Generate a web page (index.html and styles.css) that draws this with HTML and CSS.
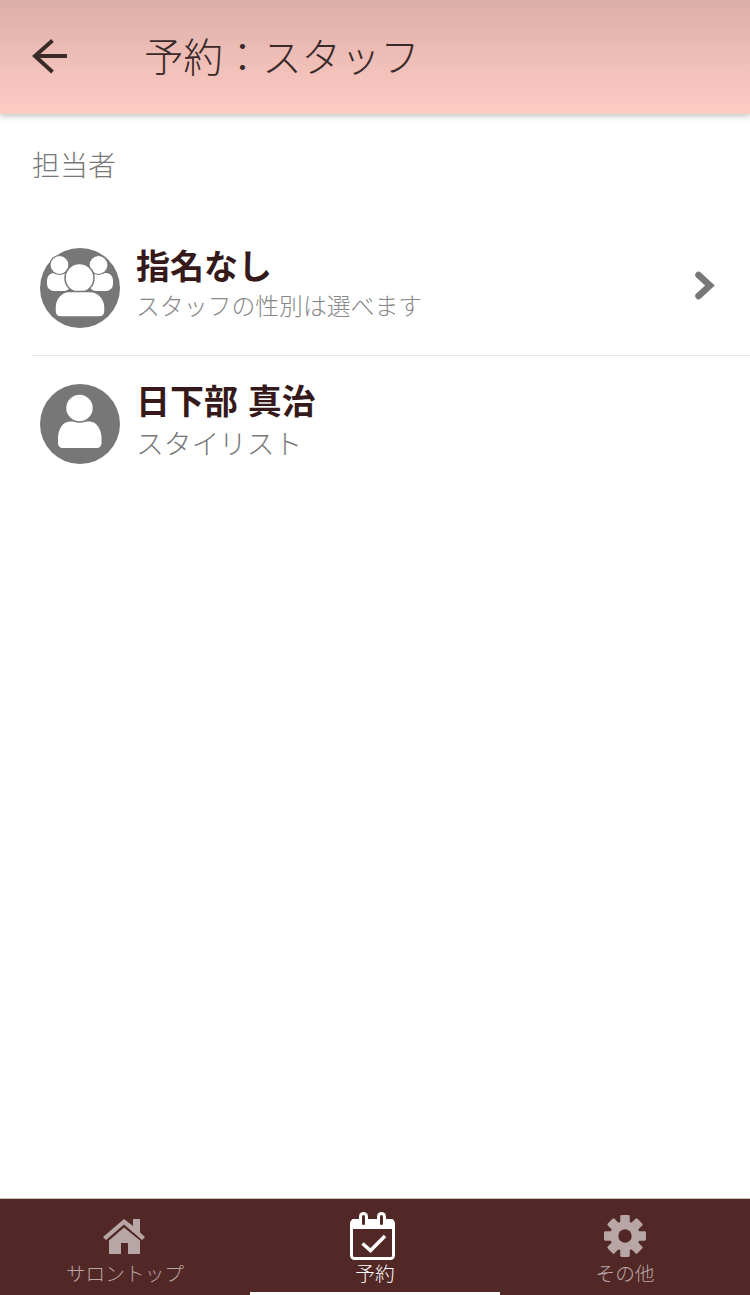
FILE: index.html
```html
<!DOCTYPE html>
<html lang="ja">
<head>
    <meta charset="UTF-8">
    <meta name="viewport" content="width=device-width, initial-scale=1.0">
    <title>予約&#xFF1A;スタッフ</title>
    <link rel="stylesheet" href="styles.css">
</head>
<body>
    <div class="page">
        <header class="app-header">
            <svg class="back-icon" viewBox="0 0 36 36" width="36" height="36">
                <path d="M36 17H4M21.500 1.500L4 17L21.500 33" fill="none" stroke="#3a2a2a" stroke-width="4"/>
            </svg>
            <h1>予約&#xFF1A;スタッフ</h1>
        </header>

        <main class="content">
            <h2 class="section-title">担当者</h2>

            <ul class="staff-list">
                <li class="staff-item">
                    <svg class="avatar" viewBox="0 0 80 80" width="80" height="80">
                        <circle cx="40" cy="40" r="40" fill="#777"/>
                        <rect x="7" y="25" width="24" height="18" rx="7" fill="#fff"/>
                        <rect x="49" y="25" width="24" height="18" rx="7" fill="#fff"/>
                        <circle cx="19.500" cy="17" r="9.500" fill="#fff" stroke="#777" stroke-width="1.200"/>
                        <circle cx="58.500" cy="17" r="9.500" fill="#fff" stroke="#777" stroke-width="1.200"/>
                        <circle cx="39.500" cy="30" r="14.500" fill="#fff" stroke="#777" stroke-width="1.500"/>
                        <path d="M29 43.500h21c9 0 15 8 15 16V63c0 3-2 6-6 6H21c-4 0-6-3-6-6v-3.500c0-8 5.500-16 14-16z" fill="#fff" stroke="#777" stroke-width="1.500"/>
                    </svg>
                    <div class="staff-text">
                        <div class="staff-name">指名なし</div>
                        <div class="staff-note">スタッフの性別は選べます</div>
                    </div>
                    <svg class="chevron" viewBox="0 0 24 32" width="24" height="32">
                        <path d="M5.500 5L17 15.500L5.500 26" fill="none" stroke="#777" stroke-width="6.500" stroke-linecap="round" stroke-linejoin="miter"/>
                    </svg>
                </li>
                <li class="staff-item">
                    <svg class="avatar" viewBox="0 0 80 80" width="80" height="80">
                        <circle cx="40" cy="40" r="40" fill="#777"/>
                        <path d="M30 37.500h20c7 0 11.500 9 11.500 16.500v5c0 3-2 5-5 5H23c-3 0-5-2-5-5v-5c0-7.500 4-16.500 12-16.500z" fill="#fff"/>
                        <circle cx="39.500" cy="24" r="14" fill="#fff" stroke="#777" stroke-width="1.500"/>
                    </svg>
                    <div class="staff-text">
                        <div class="staff-name">日下部 真治</div>
                        <div class="staff-note staff-role">スタイリスト</div>
                    </div>
                </li>
            </ul>
        </main>

        <nav class="tab-bar">
            <a class="tab">
                <div class="tab-icon home-icon">
                    <svg viewBox="0 0 42 35" width="42" height="35">
                        <path d="M21 0L0 18l3 3L21 5.500 39 21l3-3-5-4.500V0h-7v7z" fill="#b8a5a5"/>
                        <path d="M21 8.500L6 21.500V35h12V24h7v11h12V21.500z" fill="#b8a5a5"/>
                    </svg>
                </div>
                <span>サロントップ</span>
            </a>
            <a class="tab active">
                <div class="tab-icon calendar-icon">
                    <svg viewBox="0 0 45 48" width="45" height="48">
                        <rect x="1.500" y="8.500" width="42" height="38" rx="3" fill="none" stroke="#fff" stroke-width="3"/>
                        <rect x="1.500" y="7" width="42" height="10" rx="2" fill="#fff"/>
                        <rect x="9" y="0" width="9" height="15" rx="4.500" fill="#fff"/>
                        <rect x="27" y="0" width="9" height="15" rx="4.500" fill="#fff"/>
                        <rect x="12" y="3" width="3" height="10" rx="1.500" fill="#512825"/>
                        <rect x="30" y="3" width="3" height="10" rx="1.500" fill="#512825"/>
                        <path d="M12.500 31.500l8 7L35 24" fill="none" stroke="#fff" stroke-width="3.500"/>
                    </svg>
                </div>
                <span>予約</span>
            </a>
            <a class="tab">
                <div class="tab-icon">
                    <svg viewBox="0 0 44 44" width="42" height="42">
                        <circle cx="22" cy="22" r="15.500" fill="#b8a5a5"/>
                        <rect x="17" y="0" width="10" height="44" rx="1.500" fill="#b8a5a5"/>
                        <rect x="17" y="0" width="10" height="44" rx="1.500" fill="#b8a5a5" transform="rotate(45 22 22)"/>
                        <rect x="17" y="0" width="10" height="44" rx="1.500" fill="#b8a5a5" transform="rotate(90 22 22)"/>
                        <rect x="17" y="0" width="10" height="44" rx="1.500" fill="#b8a5a5" transform="rotate(135 22 22)"/>
                        <circle cx="22" cy="22" r="7" fill="#512825"/>
                    </svg>
                </div>
                <span>その他</span>
            </a>
        </nav>
    </div>
</body>
</html>
```

FILE: styles.css
```css
* {
    box-sizing: border-box;
}

body {
    margin: 0;
    padding: 0;
    background-color: #fff;
    font-family: "Noto Sans CJK JP", "Noto Sans", sans-serif;
}

.page {
    display: flex;
    flex-direction: column;
    height: 1295px;
    overflow: hidden;
}

.app-header {
    display: flex;
    align-items: center;
    flex: none;
    height: 114px;
    padding-left: 31px;
    background: linear-gradient(#dcaea8, #ffccc4);
    box-shadow: 0 2px 6px rgba(0, 0, 0, 0.25);
}

.back-icon {
    flex: none;
}

.app-header h1 {
    margin: 0 0 5px 77px;
    font-size: 39.4px;
    font-weight: 300;
    color: #3a2a2a;
}

.content {
    flex: 1;
}

.section-title {
    margin: 0;
    padding: 31px 0 0 32px;
    font-size: 28px;
    line-height: 38px;
    font-weight: 300;
    color: #777;
}

.staff-list {
    list-style: none;
    margin: 37px 0 0 32px;
    padding: 0;
}

.staff-item {
    display: flex;
    align-items: center;
    height: 136px;
    padding: 0 33px 0 8px;
    border-bottom: 1px solid #e8e8e8;
}

.staff-item:last-child {
    border-bottom: none;
}

.avatar {
    flex: none;
}

.staff-text {
    flex: 1;
    margin-left: 16px;
    margin-bottom: 10px;
}

.staff-name {
    font-size: 34px;
    line-height: 44px;
    font-weight: 700;
    word-spacing: 2px;
    color: #36191a;
}

.staff-note {
    margin-top: 1px;
    font-size: 23.85px;
    line-height: 34px;
    font-weight: 300;
    color: #888;
}

.staff-role {
    margin-top: 2px;
    font-size: 27.7px;
    line-height: 36px;
    color: #777;
}

.chevron {
    flex: none;
    margin-bottom: 4px;
}

.tab-bar {
    display: flex;
    flex: none;
    height: 97px;
    background-color: #512825;
    border-top: 1px solid #c9bcbc;
}

.tab {
    position: relative;
    display: flex;
    flex: 1;
    flex-direction: column;
    align-items: center;
    justify-content: flex-end;
    padding-bottom: 9px;
    color: #b8a5a5;
    font-size: 19.7px;
    line-height: 26px;
    font-weight: 300;
}

.tab-icon {
    display: flex;
    align-items: center;
    justify-content: center;
    height: 48px;
}

.home-icon {
    margin-left: -2px;
}

.calendar-icon {
    margin-left: -5px;
}

.tab.active {
    color: #fff;
}

.tab.active::after {
    content: "";
    position: absolute;
    left: 0;
    right: 0;
    bottom: 0;
    height: 3px;
    background-color: #fff;
}
```
